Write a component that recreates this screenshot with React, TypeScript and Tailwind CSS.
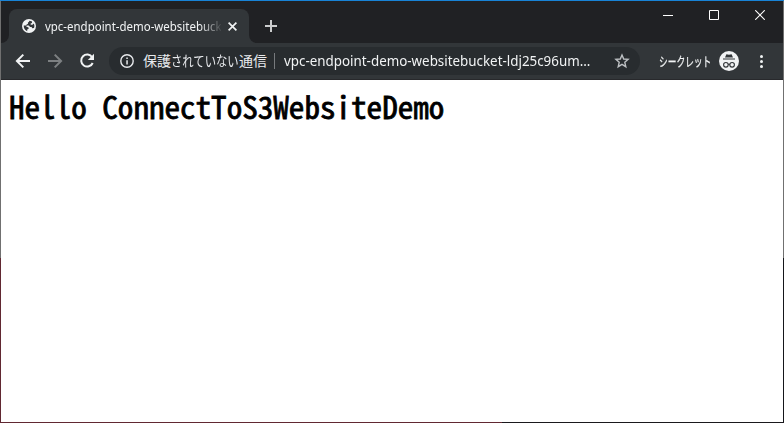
import React from "react";

function Globe() {
  return (
    <svg className="h-[14px] w-[14px] shrink-0" viewBox="0 0 14 14">
      <circle cx="7" cy="7" r="7" fill="#f1f3f4" />
      <path d="M7.2 1.7C7.6 2.6 6.6 3 5.9 3.5L6 4.8L4.7 5.6L3.8 6.6H1.7C1.5 9.1 3 11.4 5.2 12.2V10.6L6.7 9.7L6.5 8.5L4.2 7.6L4.5 6.5H6.8L8.1 8H9.6L10.2 9.2L12 9C12.7 7.4 12.4 5.8 11.7 4.6L10.5 5.8H8.8L8.5 4.7L10.1 3.7L9.8 2.3Z" fill="#323639" />
    </svg>
  );
}

function Back() {
  return (
    <svg className="h-4 w-4" viewBox="0 0 16 16" fill="none" stroke="#f1f3f4" strokeWidth="2">
      <path d="M15 8H2.5M8.3 1.6L1.9 8L8.3 14.4" />
    </svg>
  );
}

function Forward() {
  return (
    <svg className="h-4 w-4" viewBox="0 0 16 16" fill="none" stroke="#7d8082" strokeWidth="2">
      <path d="M1 8H13.5M7.7 1.6L14.1 8L7.7 14.4" />
    </svg>
  );
}

function Reload() {
  return (
    <svg className="h-4 w-4" viewBox="0 0 16 16">
      <path d="M13.2 4.2A6 6 0 1 0 13.7 10" fill="none" stroke="#f1f3f4" strokeWidth="2" />
      <path d="M15 .8V7H8.8Z" fill="#f1f3f4" />
    </svg>
  );
}

function Incognito() {
  return (
    <svg className="h-5 w-5" viewBox="0 0 20 20">
      <circle cx="10" cy="10" r="10" fill="#f1f3f4" />
      <path d="M7.4 3.2L10 3.8L12.6 3.2L14 6.5H6Z M4 7.4H16V8.5H4Z" fill="#323639" />
      <g fill="none" stroke="#323639" strokeWidth="1.1">
        <circle cx="6.9" cy="13.8" r="2.3" />
        <circle cx="13.1" cy="13.8" r="2.3" />
        <path d="M9.1 13.5Q10 13 10.9 13.5" />
      </g>
    </svg>
  );
}

function TabStrip() {
  return (
    <div className="flex h-[42px] items-start">
      <div className="flex h-[42px] w-2 items-end bg-[#323639]">
        <div className="h-[42px] w-2 rounded-br-lg bg-[#202124]" />
      </div>
      <div className="mt-2 flex h-[34px] w-[240px] items-center rounded-t-lg bg-[#323639] pl-[13px]">
        <Globe />
        <div className="ml-[9px] h-5 w-[176px] overflow-hidden whitespace-nowrap text-[12px] leading-[21px] text-[#f1f3f4] [mask-image:linear-gradient(to_right,black_155px,transparent_178px)]">
          <span className="inline-block origin-left scale-x-[0.955]">vpc-endpoint-demo-websitebuck</span>
        </div>
        <svg className="ml-[7px] h-[9px] w-[9px]" viewBox="0 0 9 9" stroke="#f1f3f4" strokeWidth="1.7">
          <path d="M.6 .6L8.4 8.4M8.4 .6L.6 8.4" />
        </svg>
      </div>
      <div className="h-[42px] w-2 bg-[#323639]">
        <div className="h-[42px] w-2 rounded-bl-lg bg-[#202124]" />
      </div>
      <svg className="ml-2 mt-[19px] h-3 w-3" viewBox="0 0 12 12" stroke="#cbcccd" strokeWidth="2">
        <path d="M6 0V12M0 6H12" />
      </svg>
      <div className="ml-auto mr-[18px] mt-[9px] flex gap-9">
        <svg className="h-[10px] w-[10px]" viewBox="0 0 10 10"><path d="M0 5.5H10" stroke="#fff" /></svg>
        <svg className="h-[10px] w-[10px]" viewBox="0 0 10 10"><path d="M.5 .5H9.5V9.5H.5Z" fill="none" stroke="#fff" /></svg>
        <svg className="h-[10px] w-[10px]" viewBox="0 0 10 10"><path d="M.2 .2L9.8 9.8M9.8 .2L.2 9.8" stroke="#fff" strokeWidth="1.1" /></svg>
      </div>
    </div>
  );
}

function Toolbar() {
  return (
    <div className="flex h-[37px] items-center border-b border-[#28292c] bg-[#323639] pl-[14px] text-[#f1f3f4]">
      <div className="flex gap-4">
        <Back />
        <Forward />
        <Reload />
      </div>
      <div className="ml-[14px] flex h-7 w-[531px] items-center rounded-full bg-[#282c2f] pl-[11px]">
        <svg className="h-[14px] w-[14px]" viewBox="0 0 14 14">
          <circle cx="7" cy="7" r="6.2" fill="none" stroke="#e8eaed" strokeWidth="1.4" />
          <path d="M6.3 3.4H7.8V4.9H6.3ZM6.3 6.2H7.8V10.6H6.3Z" fill="#e8eaed" />
        </svg>
        <div className="ml-[9px] flex h-6 w-[124px] whitespace-nowrap font-['Noto_Sans_CJK_JP',sans-serif] text-[14px] leading-[23px] text-[#e8eaed]">
          <span className="w-7">保護</span>
          <span className="w-[68px]"><span className="inline-block origin-left scale-x-[0.81]">されていない</span></span>
          <span className="w-7">通信</span>
        </div>
        <div className="ml-[7px] h-4 w-px bg-[#777a7d]" />
        <div className="ml-[9px] w-[308px] whitespace-nowrap text-[14px] leading-6">
          <span className="inline-block origin-left scale-x-[0.955]">vpc-endpoint-demo-websitebucket-ldj25c96um...</span>
        </div>
        <svg className="ml-[22px] h-4 w-4" viewBox="0 0 16 16" fill="none" stroke="#bdc0c3" strokeWidth="1.4">
          <path d="M8 2L9.7 6L14.1 6.4L10.8 9.3L11.8 13.7L8 11.4L4.2 13.7L5.2 9.3L1.9 6.4L6.3 6Z" />
        </svg>
      </div>
      <div className="ml-[19px] w-[52px] whitespace-nowrap font-['Noto_Sans_CJK_JP',sans-serif] text-[13px] leading-6">
        <span className="inline-block origin-left scale-x-[0.67] [-webkit-text-stroke:0.25px_#f1f3f4]">シークレット</span>
      </div>
      <div className="ml-[8px]"><Incognito /></div>
      <div className="ml-[21px] flex flex-col gap-[2px]">
        <i className="h-[3px] w-[3px] rounded-full bg-[#f1f3f4]" />
        <i className="h-[3px] w-[3px] rounded-full bg-[#f1f3f4]" />
        <i className="h-[3px] w-[3px] rounded-full bg-[#f1f3f4]" />
      </div>
    </div>
  );
}

export default function App() {
  return (
    <div className="flex h-[423px] w-[784px] flex-col overflow-hidden bg-white font-['Noto_Sans','Noto_Sans_CJK_JP',sans-serif]">
      <div className="h-px shrink-0 bg-[#1883d7]" />
      <div className="flex min-h-0 flex-1">
        <div className="flex w-px flex-col">
          <div className="h-[257px] bg-[#707070]" />
          <div className="flex-1 bg-[#612832]" />
        </div>
        <div className="flex w-[782px] flex-col bg-[#202124]">
          <TabStrip />
          <Toolbar />
          <main className="flex-1 bg-white pl-2 pt-1.5">
            <h1 className="h-10 w-[438px] whitespace-nowrap font-['Noto_Sans_Mono_CJK_JP','DejaVu_Sans_Mono',monospace] text-[31.1px] leading-10 text-black [-webkit-text-stroke:0.8px_black]">
              Hello ConnectToS3WebsiteDemo
            </h1>
          </main>
        </div>
        <div className="flex w-px flex-col">
          <div className="h-[257px] bg-[#707070]" />
          <div className="flex-1 bg-[#15161a]" />
        </div>
      </div>
      <div className="flex h-px shrink-0">
        <div className="w-[502px] bg-[#612832]" />
        <div className="flex-1 bg-[#1a191d]" />
      </div>
    </div>
  );
}
